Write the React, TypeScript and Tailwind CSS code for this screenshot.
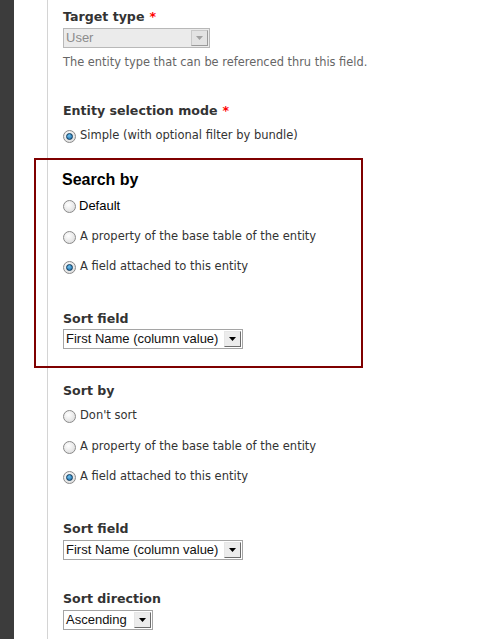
import type { ReactNode } from 'react';

const lucida = "font-['DejaVu_Sans',Verdana,sans-serif]";
const arial = "font-['Liberation_Sans',Arial,sans-serif]";

const Radio = ({ checked }: { checked?: boolean }) => (
  <span className="relative inline-block w-[13px] h-[13px] shrink-0 rounded-full border border-[#8a8a8a] bg-[radial-gradient(circle_at_40%_35%,#ffffff,#d6d6d6)]">
    {checked && (
      <span className="absolute left-[2px] top-[2px] w-[7px] h-[7px] rounded-full border border-[#0b3a5c] bg-[radial-gradient(circle_at_40%_35%,#6fc3f0,#1560a0)]" />
    )}
  </span>
);

const RadioRow = ({
  label,
  checked,
  className = '',
}: {
  label: string;
  checked?: boolean;
  className?: string;
}) => (
  <div className={`flex items-center h-[18px] gap-[4px] ${className}`}>
    <Radio checked={checked} />
    <span className={`${lucida} text-[11.5px] text-[#333]`}>{label}</span>
  </div>
);

const Label = ({ children, className = '' }: { children: ReactNode; className?: string }) => (
  <div className={`${lucida} font-bold text-[12.6px] leading-[18px] text-[#333] ${className}`}>{children}</div>
);

const Required = () => <span className="text-[#f00] ml-[5px]">*</span>;

const Select = ({
  value,
  width,
  disabled,
  className = '',
}: {
  value: string;
  width: string;
  disabled?: boolean;
  className?: string;
}) => (
  <div
    className={`flex h-[20px] ${width} border ${
      disabled ? 'border-[#b8b8b8] bg-[#ebebeb]' : 'border-[#a5a5a5] bg-white'
    } ${className}`}
  >
    <div
      className={`${arial} flex-1 text-[13px] leading-[18px] pl-[2px] ${
        disabled ? 'text-[#8c8c8c]' : 'text-[#111]'
      }`}
    >
      {value}
    </div>
    <div
      className={`w-[17px] m-[1px] flex items-center justify-center border ${
        disabled
          ? 'border-[#c9c9c9] border-r-[#9a9a9a] border-b-[#9a9a9a] bg-[#e3e3e3]'
          : 'border-[#e6e6e6] border-r-[#6d6d6d] border-b-[#6d6d6d] bg-[#ececec]'
      }`}
    >
      <svg width="7" height="4" viewBox="0 0 7 4">
        <path d="M0 0h7L3.5 4z" fill={disabled ? '#a0a0a0' : '#000'} />
      </svg>
    </div>
  </div>
);

export default function App() {
  return (
    <div className="flex min-h-[639px] bg-white">
      <div className="w-[14px] bg-[#3c3c3c] shrink-0" />
      <div className="ml-[33px] border-l border-[#d4d4d4] pl-[15px] pt-[8px] flex-1">
        <Label>
          Target type
          <Required />
        </Label>
        <Select value="User" width="w-[147px]" disabled className="mt-[2px]" />
        <div className={`${lucida} text-[11.4px] leading-[16px] text-[#666] mt-[6px]`}>
          The entity type that can be referenced thru this field.
        </div>

        <Label className="mt-[32px]">
          Entity selection mode
          <Required />
        </Label>
        <RadioRow label="Simple (with optional filter by bundle)" checked className="mt-[7px]" />

        <div className="mt-[13px] -ml-[29px] w-[329px] border-2 border-[#7f0000] pl-[27px] pt-[10px] pb-[17px]">
          <div className={`${arial} font-bold text-[16px] leading-[20px] text-black -ml-[1px]`}>Search by</div>
          <div className="flex items-center h-[18px] gap-[3px] mt-[7px]">
            <Radio />
            <span className={`${arial} text-[13px] text-black`}>Default</span>
          </div>
          <RadioRow label="A property of the base table of the entity" className="mt-[13px]" />
          <RadioRow label="A field attached to this entity" checked className="mt-[12px]" />
          <Label className="mt-[34px]">Sort field</Label>
          <Select value="First Name (column value)" width="w-[180px]" className="mt-[1px]" />
        </div>

        <Label className="mt-[14px]">Sort by</Label>
        <RadioRow label="Don't sort" className="mt-[7px]" />
        <RadioRow label="A property of the base table of the entity" className="mt-[13px]" />
        <RadioRow label="A field attached to this entity" checked className="mt-[12px]" />

        <Label className="mt-[34px]">Sort field</Label>
        <Select value="First Name (column value)" width="w-[180px]" className="mt-[2px]" />

        <Label className="mt-[30px]">Sort direction</Label>
        <Select value="Ascending" width="w-[90px]" className="mt-[2px]" />
      </div>
    </div>
  );
}
